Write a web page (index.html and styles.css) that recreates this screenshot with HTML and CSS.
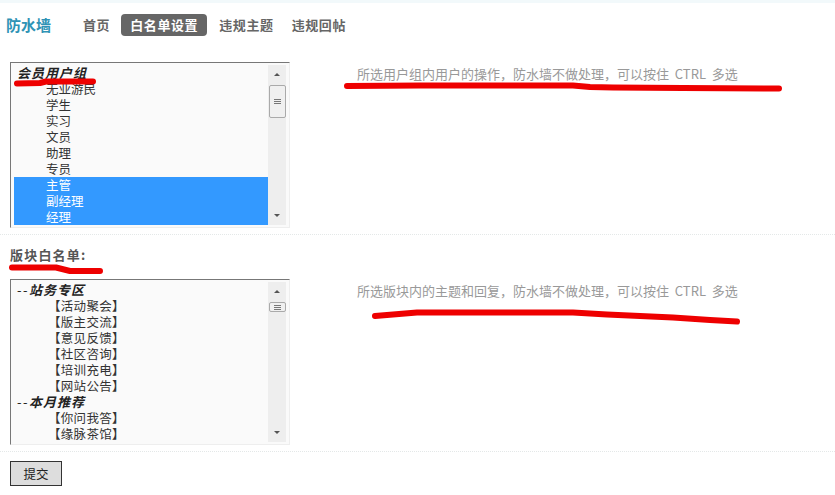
FILE: index.html
```html
<!DOCTYPE html>
<html lang="zh">
<head>
<meta charset="utf-8">
<title>防水墙</title>
<link rel="stylesheet" href="styles.css">
</head>
<body>
<header class="top">
  <h1 class="brand">防水墙</h1>
  <nav class="nav">
    <a class="nav-item">首页</a>
    <a class="nav-item active">白名单设置</a>
    <a class="nav-item">违规主题</a>
    <a class="nav-item">违规回帖</a>
  </nav>
</header>
<main>
  <section class="setting first">
    <div class="listbox">
      <div class="rows">
        <div class="row group">会员用户组</div>
        <div class="row opt">无业游民</div>
        <div class="row opt">学生</div>
        <div class="row opt">实习</div>
        <div class="row opt">文员</div>
        <div class="row opt">助理</div>
        <div class="row opt">专员</div>
        <div class="row opt sel">主管</div>
        <div class="row opt sel">副经理</div>
        <div class="row opt sel">经理</div>
      </div>
      <div class="scroll">
        <span class="arrow up"></span>
        <span class="thumb big"><i></i><i></i><i></i></span>
        <span class="arrow down"></span>
      </div>
    </div>
    <p class="hint">所选用户组内用户的操作，防水墙不做处理，可以按住 &nbsp;CTRL&nbsp; 多选</p>
  </section>
  <hr class="dots">
  <h2 class="label">版块白名单:</h2>
  <section class="setting">
    <div class="listbox">
      <div class="rows">
        <div class="row group"><span class="dash">--</span>站务专区</div>
        <div class="row forum">【活动聚会】</div>
        <div class="row forum">【版主交流】</div>
        <div class="row forum">【意见反馈】</div>
        <div class="row forum">【社区咨询】</div>
        <div class="row forum">【培训充电】</div>
        <div class="row forum">【网站公告】</div>
        <div class="row group"><span class="dash">--</span>本月推荐</div>
        <div class="row forum">【你问我答】</div>
        <div class="row forum">【缘脉茶馆】</div>
      </div>
      <div class="scroll">
        <span class="arrow up"></span>
        <span class="thumb small"><i></i><i></i><i></i></span>
        <span class="arrow down"></span>
      </div>
    </div>
    <p class="hint">所选版块内的主题和回复，防水墙不做处理，可以按住 &nbsp;CTRL&nbsp; 多选</p>
  </section>
  <hr class="dots second">
  <button class="submit" type="button">提交</button>
</main>
<svg class="marks" width="835" height="495" viewBox="0 0 835 495" aria-hidden="true">
  <path d="M17 83.5 L40 83 L46 81.5 L93 81.5"/>
  <path d="M12 267.5 L56 267.5 L70 271 L100 271"/>
  <path d="M347 86 L420 85.5 L573 85.5 L590 87 L613 87.5 L683 88 L779 88.5"/>
  <path d="M375 316 L417 312.5 L573 312.5 L607 314.5 L673 317.5 L710 320 L737 321.5"/>
</svg>
</body>
</html>
```

FILE: styles.css
```css
* { box-sizing: border-box; }
html, body { margin: 0; padding: 0; }
body {
  position: relative;
  width: 835px;
  height: 495px;
  overflow: hidden;
  background: #fff;
  border-top: 3px solid #f2f9fb;
  font-family: "Noto Sans CJK SC", "Liberation Sans", sans-serif;
  font-size: 12px;
  color: #333;
}
.top {
  display: flex;
  align-items: center;
  height: 44px;
  padding: 0 0 0 6px;
}
.brand {
  margin: 0 22px 0 0;
  width: 47px;
  font-size: 15px;
  line-height: 20px;
  font-weight: 700;
  color: #2f93b5;
  white-space: nowrap;
}
.nav { display: flex; align-items: center; margin-left: 8px; }
.nav-item {
  font-size: 13px;
  font-weight: 700;
  letter-spacing: .6px;
  line-height: 22px;
  padding: 0 9px;
  color: #666;
}
.nav-item:first-child { padding: 0 11px 0 0; }
.nav-item.active {
  margin-right: 3px;
  background: #666;
  color: #fff;
  border-radius: 4px;
}
main { padding: 15px 0 0 10px; }
.setting { display: flex; align-items: flex-start; }
.listbox {
  display: flex;
  justify-content: space-between;
  width: 280px;
  height: 166px;
  padding: 2px 3px;
  background: #fafafa;
  border: 1px solid;
  border-color: #777 #eee #eee #777;
}
.rows { width: 255px; }
.row {
  height: 16px;
  line-height: 16px;
  font-size: 12.5px;
  white-space: nowrap;
  color: #333;
}
.group {
  font-size: 13px;
  font-weight: 700;
  font-style: italic;
  letter-spacing: 1px;
  padding-left: 3px;
  color: #222;
}
.dash { font-weight: 400; font-style: normal; letter-spacing: 1.5px; }
.opt { padding-left: 32px; }
.forum { padding-left: 34px; letter-spacing: .3px; }
.sel { background: #3399ff; color: #fff; }
.scroll {
  display: flex;
  flex-direction: column;
  align-items: center;
  width: 18px;
  height: 160px;
  background: #eee;
}
.arrow {
  flex: none;
  width: 0;
  height: 0;
  border-left: 3px solid transparent;
  border-right: 3px solid transparent;
}
.arrow.up { margin-top: 8px; border-bottom: 3px solid #555; }
.arrow.down { margin-top: auto; margin-bottom: 8px; border-top: 3px solid #555; }
.thumb {
  flex: none;
  display: flex;
  flex-direction: column;
  justify-content: center;
  align-items: center;
  gap: 1px;
  background: #f0f0f0;
  border: 1px solid #aaa;
  border-radius: 2px;
}
.thumb i { display: block; width: 7px; height: 1px; background: #777; }
.thumb.big { width: 17px; height: 33px; margin-top: 9px; }
.thumb.small { width: 17px; height: 10px; margin-top: 9px; }
.hint {
  margin: 3px 0 0 67px;
  font-size: 13px;
  line-height: 18px;
  color: #999;
  white-space: nowrap;
}
.dots {
  height: 0;
  margin: 6px 0 0 -10px;
  border: 0;
  border-top: 1px dotted #e4e8e8;
}
.dots.second { margin-top: 6px; }
.label {
  margin: 11px 0 0;
  height: 33px;
  font-size: 13px;
  line-height: 18px;
  font-weight: 700;
  letter-spacing: 1.2px;
  color: #555;
}
.submit {
  display: block;
  width: 52px;
  height: 25px;
  margin: 9px 0 0;
  padding: 0;
  font-family: inherit;
  font-size: 12.5px;
  color: #222;
  background: #ddd;
  border: 1px solid #333;
}
.marks { position: absolute; left: 0; top: -3px; pointer-events: none; }
.marks path {
  fill: none;
  stroke: #ee0000;
  stroke-width: 6;
  stroke-linecap: round;
  stroke-linejoin: round;
}
```
